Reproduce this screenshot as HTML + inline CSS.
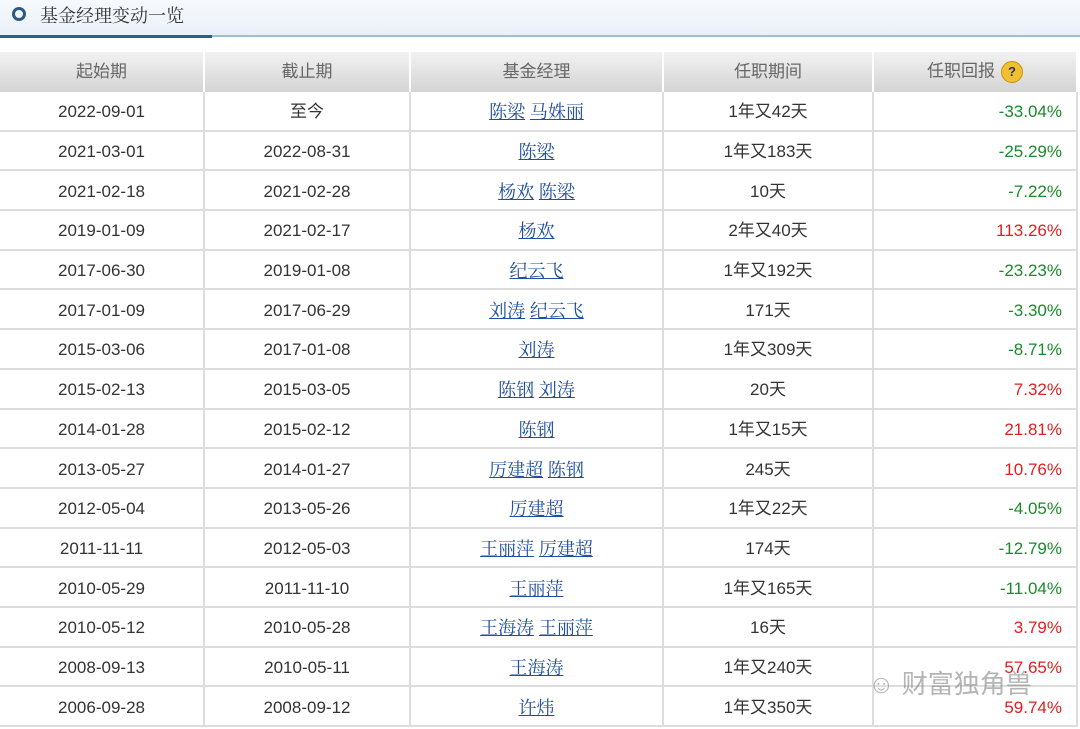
<!DOCTYPE html>
<html><head><meta charset="utf-8"><style>
body{margin:0;width:1080px;height:729px;overflow:hidden;background:#fff;font-family:"Liberation Sans","Noto Sans CJK SC",sans-serif;}
.title{position:absolute;left:0;top:0;width:1080px;height:36px;background:linear-gradient(#f7fafd,#e8f0f8);}
.title .c{position:absolute;left:12px;top:7px;width:8px;height:8px;border:3px solid #2a5a86;border-radius:50%;}
.title .t{position:absolute;left:40px;top:2px;font:18px "Noto Serif CJK SC","Liberation Serif",serif;color:#333;}
.l1{position:absolute;left:0;top:35px;width:212px;height:3px;background:#2c5f86;}
.l2{position:absolute;left:212px;top:35px;width:868px;height:2px;background:#9dbdd6;}
table{position:absolute;left:0;top:52px;border-collapse:collapse;table-layout:fixed;width:1077px;}
th{height:40px;background:linear-gradient(#f2f2f2,#d4d4d4);font-weight:normal;color:#666;font-size:17px;border-right:2px solid #fff;padding:0;line-height:20px;}
td{height:34.7px;border:2px solid #ddd;border-top:0;text-align:center;font-size:17px;color:#333;padding:3px 0 0 0;line-height:20px;vertical-align:middle;}
td:first-child{border-left:0}
td.r{text-align:right;padding-right:14px;}
.g{color:#1a8a2a}.red{color:#e02020}
a{color:#1f4fa0;text-decoration:underline;font-family:"Noto Serif CJK SC",serif;font-size:18px;line-height:20px;}
.q{display:inline-block;width:20px;height:20px;border-radius:50%;background:#f0c030;border:1px solid #c89010;color:#335;font-size:13px;font-weight:bold;line-height:20px;vertical-align:middle;margin-left:6px;}
.wm{position:absolute;left:868px;top:664px;font-size:26px;color:rgba(120,120,120,.55);}
</style></head><body>
<div class="title"><div class="c"></div><div class="t">基金经理变动一览</div></div>
<div class="l1"></div><div class="l2"></div>
<table>
<colgroup><col style="width:204px"><col style="width:206px"><col style="width:253px"><col style="width:210px"><col style="width:204px"></colgroup>
<tr><th>起始期</th><th>截止期</th><th>基金经理</th><th>任职期间</th><th>任职回报<span class="q">?</span></th></tr>
<tr><td>2022-09-01</td><td>至今</td><td><a>陈梁</a> <a>马姝丽</a></td><td>1年又42天</td><td class="r g">-33.04%</td></tr>
<tr><td>2021-03-01</td><td>2022-08-31</td><td><a>陈梁</a></td><td>1年又183天</td><td class="r g">-25.29%</td></tr>
<tr><td>2021-02-18</td><td>2021-02-28</td><td><a>杨欢</a> <a>陈梁</a></td><td>10天</td><td class="r g">-7.22%</td></tr>
<tr><td>2019-01-09</td><td>2021-02-17</td><td><a>杨欢</a></td><td>2年又40天</td><td class="r red">113.26%</td></tr>
<tr><td>2017-06-30</td><td>2019-01-08</td><td><a>纪云飞</a></td><td>1年又192天</td><td class="r g">-23.23%</td></tr>
<tr><td>2017-01-09</td><td>2017-06-29</td><td><a>刘涛</a> <a>纪云飞</a></td><td>171天</td><td class="r g">-3.30%</td></tr>
<tr><td>2015-03-06</td><td>2017-01-08</td><td><a>刘涛</a></td><td>1年又309天</td><td class="r g">-8.71%</td></tr>
<tr><td>2015-02-13</td><td>2015-03-05</td><td><a>陈钢</a> <a>刘涛</a></td><td>20天</td><td class="r red">7.32%</td></tr>
<tr><td>2014-01-28</td><td>2015-02-12</td><td><a>陈钢</a></td><td>1年又15天</td><td class="r red">21.81%</td></tr>
<tr><td>2013-05-27</td><td>2014-01-27</td><td><a>厉建超</a> <a>陈钢</a></td><td>245天</td><td class="r red">10.76%</td></tr>
<tr><td>2012-05-04</td><td>2013-05-26</td><td><a>厉建超</a></td><td>1年又22天</td><td class="r g">-4.05%</td></tr>
<tr><td>2011-11-11</td><td>2012-05-03</td><td><a>王丽萍</a> <a>厉建超</a></td><td>174天</td><td class="r g">-12.79%</td></tr>
<tr><td>2010-05-29</td><td>2011-11-10</td><td><a>王丽萍</a></td><td>1年又165天</td><td class="r g">-11.04%</td></tr>
<tr><td>2010-05-12</td><td>2010-05-28</td><td><a>王海涛</a> <a>王丽萍</a></td><td>16天</td><td class="r red">3.79%</td></tr>
<tr><td>2008-09-13</td><td>2010-05-11</td><td><a>王海涛</a></td><td>1年又240天</td><td class="r red">57.65%</td></tr>
<tr><td>2006-09-28</td><td>2008-09-12</td><td><a>许炜</a></td><td>1年又350天</td><td class="r red">59.74%</td></tr>
</table>
<div class="wm">☺ 财富独角兽</div>
</body></html>
